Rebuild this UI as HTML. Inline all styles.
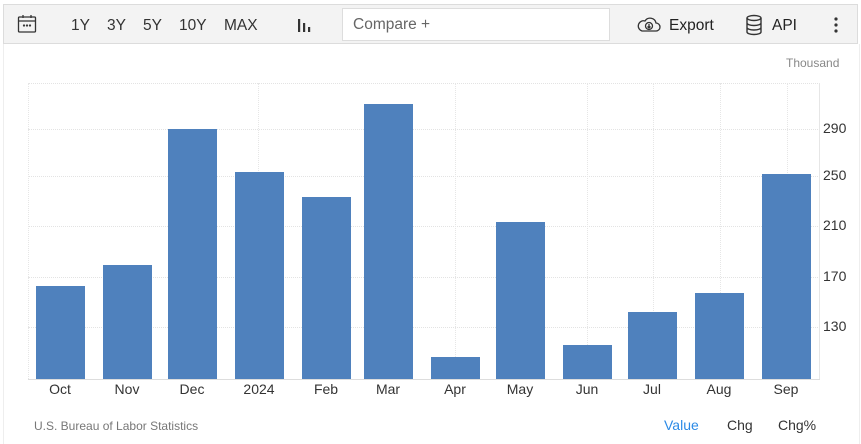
<!DOCTYPE html>
<html><head><meta charset="utf-8"><style>
body{margin:0;width:861px;height:444px;background:#fff;font-family:"Liberation Sans",Arial,sans-serif;position:relative;overflow:hidden}
.tb{position:absolute;left:3px;top:4px;width:855px;height:40px;background:#f3f3f3;border:1px solid #dcdcdc;box-sizing:border-box}
.t{position:absolute;top:12px;font-size:15.5px;color:#333}
.cmp{position:absolute;left:338px;top:3px;width:268px;height:33px;background:#fff;border:1px solid #ddd;box-sizing:border-box;font-size:15.5px;color:#666;padding:7px 10px}
.frame{position:absolute;left:3px;top:44px;width:855px;height:400px;border-left:1px solid #eee;border-right:1px solid #eee}
.bar{position:absolute;background:#4f81bd;width:49px}
.hl{position:absolute;left:28px;width:792px;border-top:1px dotted #e3e3e3}
.vl{position:absolute;top:83px;height:296px;border-left:1px dotted #e6e6e6}
.yl{position:absolute;left:823px;font-size:14px;color:#333}
.xl{position:absolute;top:381px;font-size:14px;color:#333;width:60px;text-align:center}
</style></head><body>
<div class="tb">
<svg style="position:absolute;left:13px;top:9px" width="20" height="20" viewBox="0 0 20 20" fill="none" stroke="#333" stroke-width="1.3"><rect x="1.5" y="3" width="17" height="15" rx="1"/><line x1="1.5" y1="7" x2="18.5" y2="7"/><line x1="6" y1="1" x2="6" y2="4"/><line x1="14" y1="1" x2="14" y2="4"/><circle cx="7" cy="11.5" r=".5"/><circle cx="10" cy="11.5" r=".5"/><circle cx="13" cy="11.5" r=".5"/></svg>
<span class="t" style="left:67px">1Y</span><span class="t" style="left:103px">3Y</span><span class="t" style="left:139px">5Y</span><span class="t" style="left:175px">10Y</span><span class="t" style="left:220px">MAX</span>
<svg style="position:absolute;left:292px;top:12px" width="16" height="16"><rect x="2" y="2" width="2.2" height="13" fill="#333"/><rect x="7" y="6" width="2.2" height="9" fill="#333"/><rect x="12" y="10" width="2.2" height="5" fill="#333"/></svg>
<div class="cmp">Compare +</div>
<svg style="position:absolute;left:632px;top:10px" width="26" height="20" viewBox="0 0 26 20" fill="none" stroke="#333" stroke-width="1.3"><path d="M6 16 H20 a4 4 0 0 0 0-8 a6 6 0 0 0-11-2 a5 5 0 0 0-3 10z"/><circle cx="13" cy="11" r="3.5"/><path d="M13 9v4M11.5 11.5 13 13 14.5 11.5"/></svg>
<span class="t" style="left:665px;color:#222">Export</span>
<svg style="position:absolute;left:741px;top:9px" width="18" height="22" viewBox="0 0 18 22" fill="none" stroke="#333" stroke-width="1.4"><ellipse cx="9" cy="4" rx="7" ry="2.5"/><path d="M2 4v14c0 1.4 3 2.5 7 2.5s7-1.1 7-2.5V4M2 9c0 1.4 3 2.5 7 2.5s7-1.1 7-2.5M2 13.5c0 1.4 3 2.5 7 2.5s7-1.1 7-2.5"/></svg>
<span class="t" style="left:768px;color:#222">API</span>
<svg style="position:absolute;left:829px;top:12px" width="6" height="16"><circle cx="3" cy="2" r="1.6" fill="#333"/><circle cx="3" cy="8" r="1.6" fill="#333"/><circle cx="3" cy="14" r="1.6" fill="#333"/></svg>
</div>
<div class="frame"></div>
<div style="position:absolute;left:786px;top:56px;font-size:12px;color:#888">Thousand</div>
<div class="hl" style="top:83px"></div>
<div class="hl" style="top:129px"></div><div class="hl" style="top:176px"></div><div class="hl" style="top:226px"></div><div class="hl" style="top:277px"></div><div class="hl" style="top:327px"></div>
<div class="vl" style="left:28px"></div><div class="vl" style="left:258px"></div><div class="vl" style="left:455px"></div><div class="vl" style="left:587px"></div><div class="vl" style="left:653px"></div><div class="vl" style="left:720px"></div><div class="vl" style="left:787px"></div>
<div style="position:absolute;left:819px;top:83px;height:296px;border-left:1px solid #e6e6e6"></div>
<div style="position:absolute;left:28px;top:379px;width:792px;border-top:1px solid #ddd"></div>
<div class="bar" style="left:36px;top:286px;height:93px"></div>
<div class="bar" style="left:103px;top:265px;height:114px"></div>
<div class="bar" style="left:168px;top:129px;height:250px"></div>
<div class="bar" style="left:235px;top:172px;height:207px"></div>
<div class="bar" style="left:302px;top:197px;height:182px"></div>
<div class="bar" style="left:364px;top:104px;height:275px"></div>
<div class="bar" style="left:431px;top:357px;height:22px"></div>
<div class="bar" style="left:496px;top:222px;height:157px"></div>
<div class="bar" style="left:563px;top:345px;height:34px"></div>
<div class="bar" style="left:628px;top:312px;height:67px"></div>
<div class="bar" style="left:695px;top:293px;height:86px"></div>
<div class="bar" style="left:762px;top:174px;height:205px"></div>
<span class="yl" style="top:120px">290</span><span class="yl" style="top:167px">250</span><span class="yl" style="top:217px">210</span><span class="yl" style="top:268px">170</span><span class="yl" style="top:318px">130</span>
<span class="xl" style="left:30px">Oct</span><span class="xl" style="left:97px">Nov</span><span class="xl" style="left:162px">Dec</span><span class="xl" style="left:229px">2024</span><span class="xl" style="left:296px">Feb</span><span class="xl" style="left:358px">Mar</span><span class="xl" style="left:425px">Apr</span><span class="xl" style="left:490px">May</span><span class="xl" style="left:557px">Jun</span><span class="xl" style="left:622px">Jul</span><span class="xl" style="left:689px">Aug</span><span class="xl" style="left:756px">Sep</span>
<div style="position:absolute;left:34px;top:419px;font-size:12px;color:#777">U.S. Bureau of Labor Statistics</div>
<span style="position:absolute;left:664px;top:417px;font-size:14px;color:#2b8ae6">Value</span>
<span style="position:absolute;left:727px;top:417px;font-size:14px;color:#333">Chg</span>
<span style="position:absolute;left:778px;top:417px;font-size:14px;color:#333">Chg%</span>
</body></html>
